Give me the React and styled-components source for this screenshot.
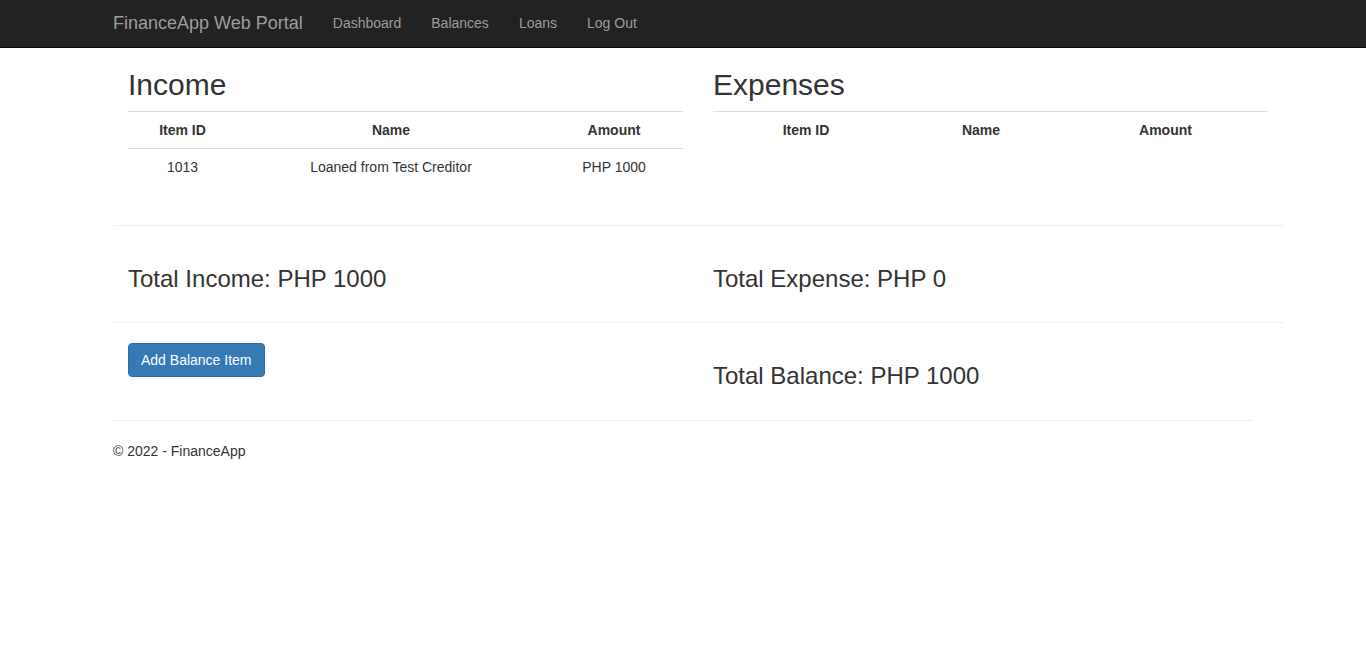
import React from "react";
import styled, { createGlobalStyle } from "styled-components";

const COLORS = {
  text: "#333333",
  navBg: "#222222",
  navBorder: "#080808",
  navLink: "#9d9d9d",
  tableLine: "#dddddd",
  rule: "#eeeeee",
  primary: "#337ab7",
  primaryBorder: "#2e6da4",
};

const income = [{ id: 1013, name: "Loaned from Test Creditor", amount: 1000 }];
const expenses = [];

const incomeCols = [109, 308, 138];
const expenseCols = [186, 164, 205];

const GlobalStyle = createGlobalStyle`
  * { box-sizing: border-box; }
  html, body { margin: 0; padding: 0; }
  body {
    font-family: "Liberation Sans", Arial, sans-serif;
    font-size: 14px;
    line-height: 20px;
    color: ${COLORS.text};
    background: #fff;
  }
`;

function App() {
  const totalIncome = income.reduce((s, i) => s + i.amount, 0);
  const totalExpense = expenses.reduce((s, i) => s + i.amount, 0);

  return (
    <>
      <GlobalStyle />
      <Navbar>
        <NavInner>
          <Brand href="#">FinanceApp Web Portal</Brand>
          <NavList>
            <NavLink href="#">Dashboard</NavLink>
            <NavLink href="#">Balances</NavLink>
            <NavLink href="#">Loans</NavLink>
            <NavLink href="#">Log Out</NavLink>
          </NavList>
        </NavInner>
      </Navbar>

      <BodyContent>
        <Section>
          <Row>
            <Col>
              <Heading>Income</Heading>
              <BalanceTable items={income} widths={incomeCols} />
            </Col>
            <Col>
              <Heading>Expenses</Heading>
              <BalanceTable items={expenses} widths={expenseCols} />
            </Col>
          </Row>
          <Rule />
          <Row>
            <Col>
              <Total>Total Income: PHP {totalIncome}</Total>
            </Col>
            <Col>
              <Total>Total Expense: PHP {totalExpense}</Total>
            </Col>
          </Row>
          <Rule />
          <Row>
            <Col>
              <Button>Add Balance Item</Button>
            </Col>
            <Col>
              <Total>Total Balance: PHP {totalIncome - totalExpense}</Total>
            </Col>
          </Row>
        </Section>
        <Rule />
        <Footer>© 2022 - FinanceApp</Footer>
      </BodyContent>
    </>
  );
}

function BalanceTable({ items, widths }) {
  return (
    <Table>
      <colgroup>
        {widths.map((w, i) => (
          <col key={i} style={{ width: w }} />
        ))}
      </colgroup>
      <thead>
        <tr>
          <Th>Item ID</Th>
          <Th>Name</Th>
          <Th>Amount</Th>
        </tr>
      </thead>
      <tbody>
        {items.map((item) => (
          <tr key={item.id}>
            <Td>{item.id}</Td>
            <Td>{item.name}</Td>
            <Td>PHP {item.amount}</Td>
          </tr>
        ))}
      </tbody>
    </Table>
  );
}

const Navbar = styled.nav`
  height: 48px;
  background-color: ${COLORS.navBg};
  border-bottom: 1px solid ${COLORS.navBorder};
`;

const NavInner = styled.div`
  width: 1140px;
  margin: 0 auto;
  display: flex;
  align-items: center;
  height: 100%;
`;

const Brand = styled.a`
  font-size: 18px;
  line-height: 20px;
  color: ${COLORS.navLink};
  text-decoration: none;
  padding: 13px 15px 14px 0;
`;

const NavList = styled.div`
  display: flex;
`;

const NavLink = styled.a`
  font-size: 14px;
  line-height: 20px;
  color: ${COLORS.navLink};
  text-decoration: none;
  padding: 13px 15px 14px;
`;

const BodyContent = styled.main`
  width: 1140px;
  margin: 0 auto;
`;

/* nested container: 1170 wide, starts at the outer content edge */
const Section = styled.div`
  width: 1170px;
`;

const Row = styled.div`
  display: grid;
  grid-template-columns: 585px 585px;
`;

const Col = styled.div`
  padding: 0 15px;
  display: flow-root;
`;

const Heading = styled.h2`
  font-size: 30px;
  font-weight: 500;
  line-height: 33px;
  margin: 20px 0 10px;
`;

const Table = styled.table`
  width: 100%;
  border-collapse: collapse;
  border-spacing: 0;
  margin-bottom: 20px;
  table-layout: fixed;
`;

const Th = styled.th`
  border-top: 1px solid ${COLORS.tableLine};
  padding: 8px;
  line-height: 20px;
  font-weight: bold;
  text-align: center;
`;

const Td = styled.td`
  border-top: 1px solid ${COLORS.tableLine};
  padding: 8px;
  line-height: 20px;
  text-align: center;
`;

const Rule = styled.hr`
  margin: 20px 0;
  border: 0;
  border-top: 1px solid ${COLORS.rule};
  height: 0;
`;

const Total = styled.h3`
  font-size: 24px;
  font-weight: 500;
  line-height: 26.4px;
  margin: 20px 0 10px;
`;

const Button = styled.button`
  font-family: inherit;
  font-size: 14px;
  line-height: 20px;
  padding: 6px 12px;
  color: #fff;
  background-color: ${COLORS.primary};
  border: 1px solid ${COLORS.primaryBorder};
  border-radius: 4px;
  cursor: pointer;
`;

const Footer = styled.footer`
  margin: 0 0 10px;
  line-height: 20px;
`;

export default App;
